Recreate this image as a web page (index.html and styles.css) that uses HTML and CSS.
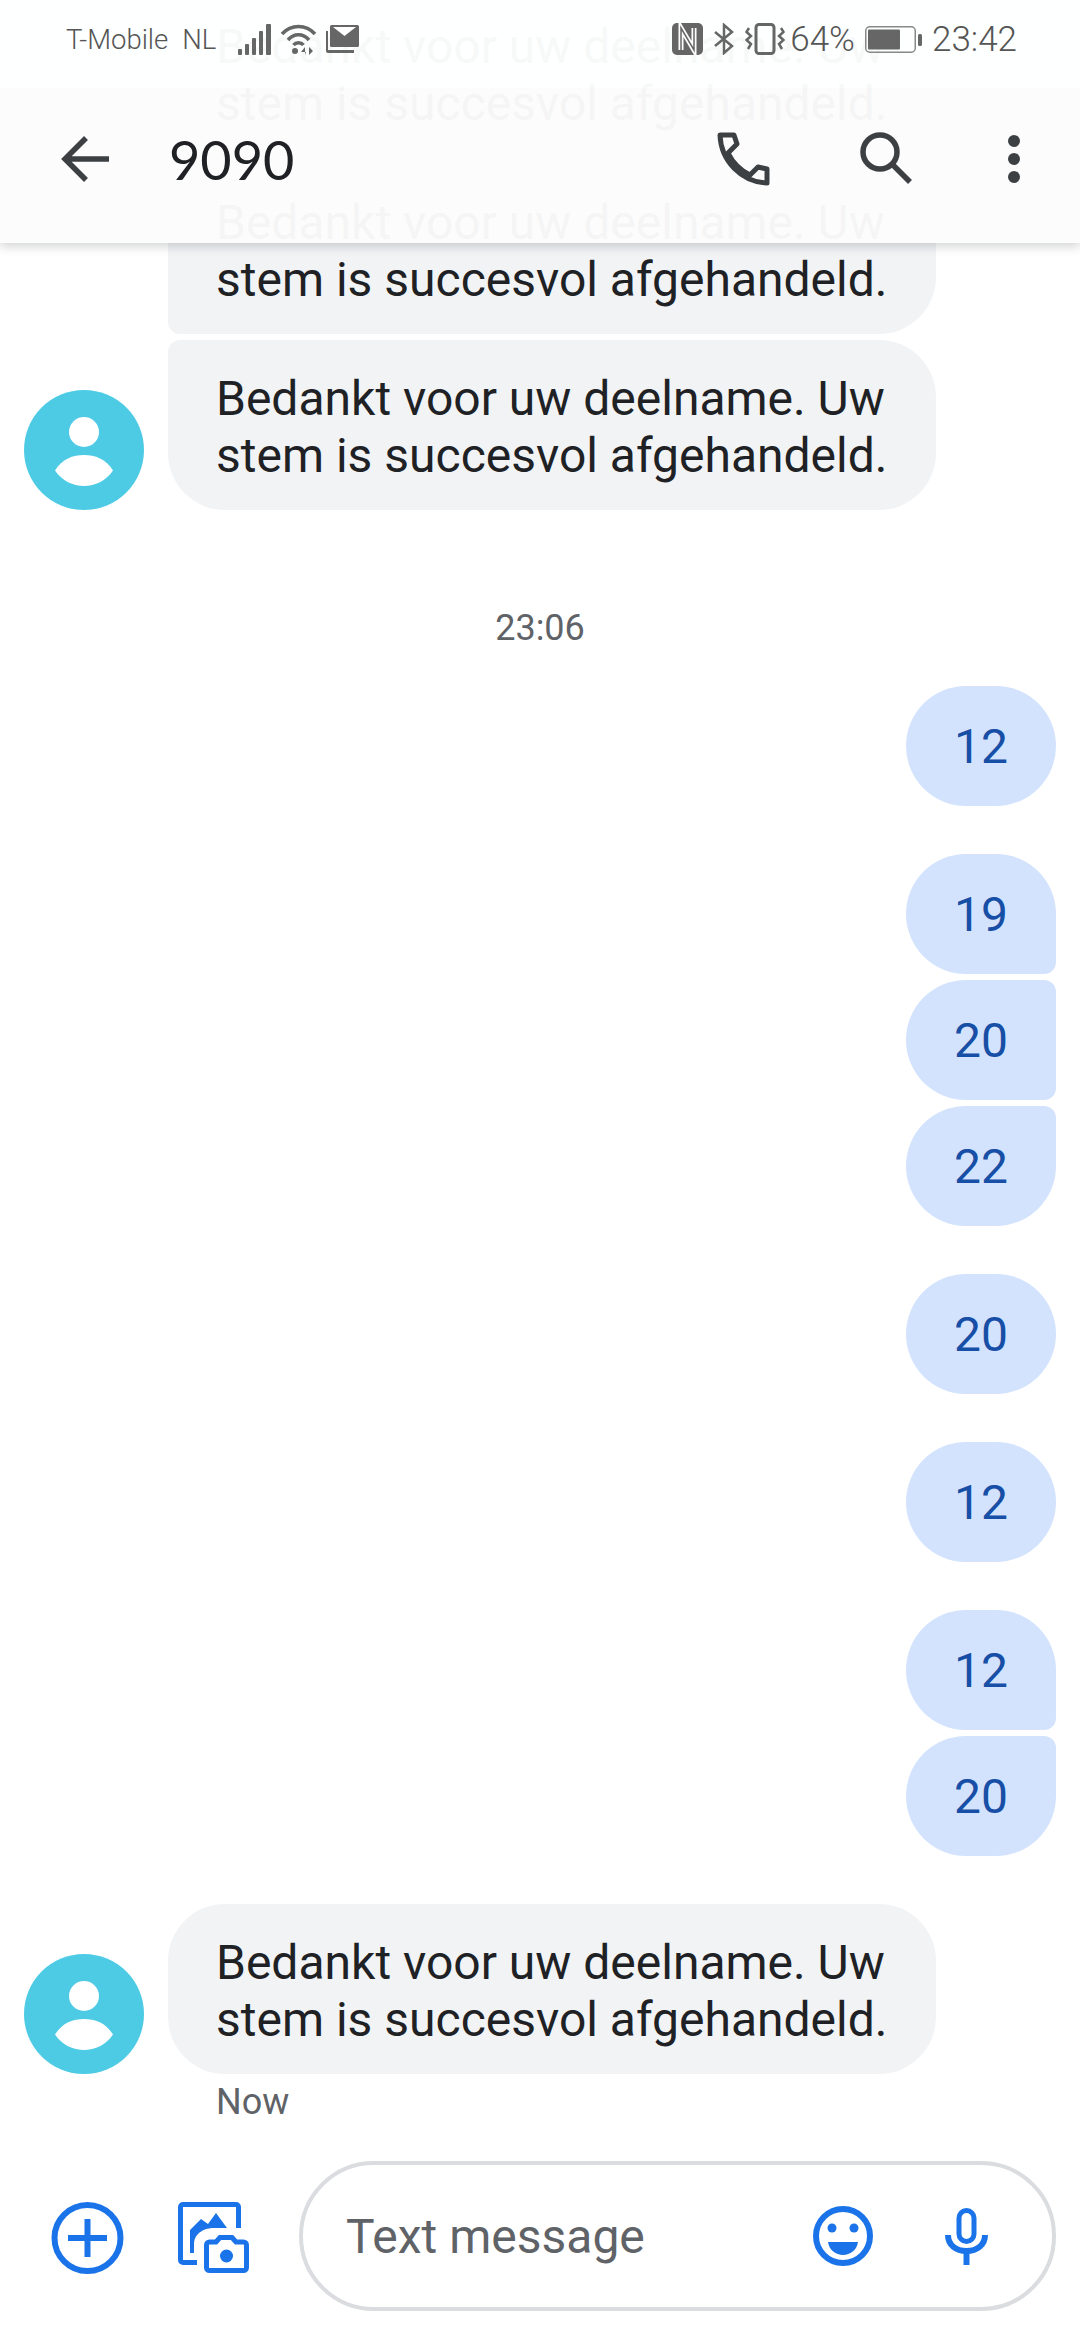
FILE: index.html
```html
<!DOCTYPE html>
<html lang="en">
<head>
<meta charset="utf-8">
<title>9090</title>
<link rel="stylesheet" href="styles.css">
</head>
<body>
<div class="screen">
  <main class="thread">
    <div class="row-in">
      <div class="avatar-slot"></div>
      <p class="bubble-in first">Bedankt voor uw deelname. Uw stem is succesvol afgehandeld.</p>
    </div>
    <div class="row-in">
      <div class="avatar-slot"></div>
      <p class="bubble-in middle">Bedankt voor uw deelname. Uw stem is succesvol afgehandeld.</p>
    </div>
    <div class="row-in">
      <svg class="avatar" viewBox="0 0 120 120"><circle cx="60" cy="60" r="60" fill="#4ecbe4"/><circle cx="60" cy="42" r="15" fill="#fff"/><path d="M31 80.500C38 69 49 65 60 65C71 65 82 69 89 80.500C82 91 71 96 60 96C49 96 38 91 31 80.500Z" fill="#fff"/></svg>
      <p class="bubble-in last">Bedankt voor uw deelname. Uw stem is succesvol afgehandeld.</p>
    </div>

    <div class="timestamp">23:06</div>

    <div class="group">
      <div class="bubble-out">12</div>
    </div>
    <div class="group">
      <div class="bubble-out out-first">19</div>
      <div class="bubble-out out-middle">20</div>
      <div class="bubble-out out-last">22</div>
    </div>
    <div class="group">
      <div class="bubble-out">20</div>
    </div>
    <div class="group">
      <div class="bubble-out">12</div>
    </div>
    <div class="group">
      <div class="bubble-out out-first">12</div>
      <div class="bubble-out out-last">20</div>
    </div>

    <div class="row-in row-final">
      <svg class="avatar" viewBox="0 0 120 120"><circle cx="60" cy="60" r="60" fill="#4ecbe4"/><circle cx="60" cy="42" r="15" fill="#fff"/><path d="M31 80.500C38 69 49 65 60 65C71 65 82 69 89 80.500C82 91 71 96 60 96C49 96 38 91 31 80.500Z" fill="#fff"/></svg>
      <p class="bubble-in single">Bedankt voor uw deelname. Uw stem is succesvol afgehandeld.</p>
    </div>
    <div class="meta">Now</div>
  </main>

  <footer class="composer">
    <svg class="ic-plus" viewBox="0 0 73 72" fill="none" stroke="#1a73e8" stroke-width="6"><circle cx="36.500" cy="36" r="33"/><path d="M17 36H56M36.500 17V55"/></svg>
    <svg class="ic-gallery" viewBox="0 0 72 72" fill="none" stroke="#1a73e8" stroke-width="5"><path d="M60.500 26V5A2.500 2.500 0 0 0 58 2.500H5A2.500 2.500 0 0 0 2.500 5V58A2.500 2.500 0 0 0 5 60.500H19"/><path d="M12 51V28L23 17L30 22L38 11L49 26H36C29 26 24 28 20 32C17 35 16 38 16 42V51Z" fill="#1a73e8" stroke="none"/><path d="M28.500 43A3 3 0 0 1 31.500 40H38L42 35.500H54L58 40H65.500A3 3 0 0 1 68.500 43V65.500A3 3 0 0 1 65.500 68.500H31.500A3 3 0 0 1 28.500 65.500Z"/><circle cx="48.500" cy="54" r="6.500" fill="#1a73e8" stroke="none"/></svg>
    <div class="field">
      <span class="placeholder">Text message</span>
      <svg class="ic-emoji" viewBox="0 0 60 60" fill="none"><circle cx="30" cy="30" r="27" stroke="#1a73e8" stroke-width="6"/><circle cx="19" cy="22" r="4.500" fill="#1a73e8"/><circle cx="41" cy="22" r="4.500" fill="#1a73e8"/><path d="M15 36H45C44 44 37 49 30 49C23 49 16 44 15 36Z" fill="#1a73e8"/></svg>
      <svg class="ic-mic" viewBox="0 0 43 57" fill="none" stroke="#1a73e8"><rect x="14" y="2.500" width="15" height="31" rx="7.500" stroke-width="5"/><path d="M3 27C3 37 11 43 21.500 43C32 43 40 37 40 27" stroke-width="6"/><path d="M21.500 42V57" stroke-width="6"/></svg>
    </div>
  </footer>

  <header class="top">
    <div class="status">
      <span class="carrier">T-Mobile</span>
      <span class="carrier region">NL</span>
      <svg class="st-signal" viewBox="0 0 34 31" fill="#666"><rect x="0" y="25" width="4" height="6" rx="1"/><rect x="7" y="20" width="4" height="11" rx="1"/><rect x="14" y="14" width="4" height="17" rx="1"/><rect x="21" y="7" width="4" height="24" rx="1"/><rect x="28" y="0" width="5" height="31" rx="1"/></svg>
      <svg class="st-wifi" viewBox="0 0 37 31" fill="none" stroke="#666" stroke-width="3.500"><path d="M2 10C11 0 26 0 35 10"/><path d="M8 16C14 9 23 9 29 16"/><path d="M13.500 21C16 18 21 18 23.500 21"/><circle cx="15" cy="27" r="3" fill="#666" stroke="none"/><path d="M25 31V23L21 28H26ZM29 23V31L33 27Z" fill="#666" stroke="none"/></svg>
      <svg class="st-mail" viewBox="0 0 33 28" fill="#666"><rect x="4" y="0" width="29" height="22" rx="1.500"/><path d="M7 2H30L18.500 11Z" fill="#fff"/><path d="M0 6H2V25H28V28H2A2 2 0 0 1 0 26Z"/></svg>
      <span class="spacer"></span>
      <svg class="st-nfc" viewBox="0 0 31 32"><rect width="31" height="32" rx="5" fill="#666"/><path d="M9 27V5L22 27V5" fill="none" stroke="#fff" stroke-width="5"/><path d="M9 27V5L22 27V5" fill="none" stroke="#666" stroke-width="1.500"/></svg>
      <svg class="st-bt" viewBox="0 0 20 32" fill="none" stroke="#666" stroke-width="2.500"><path d="M1 9L18 23L10 30V2L18 9L1 23"/></svg>
      <svg class="st-vib" viewBox="0 0 40 32" fill="none" stroke="#666"><rect x="11" y="1.500" width="18" height="29" rx="3" stroke-width="3"/><path d="M4 5L1.500 9L6 13L1.500 17L6 21L3 26" stroke-width="2.500"/><path d="M36 5L38.500 9L34 13L38.500 17L34 21L37 26" stroke-width="2.500"/></svg>
      <span class="st-text pct">64%</span>
      <svg class="st-batt" viewBox="0 0 57 27"><rect x="0.750" y="0.750" width="49.500" height="25.500" rx="4" fill="none" stroke="#888" stroke-width="1.500"/><rect x="3" y="3.500" width="32" height="20" rx="1" fill="#666"/><rect x="53" y="8" width="4" height="12" rx="1.500" fill="#666"/></svg>
      <span class="st-text clock">23:42</span>
    </div>
    <div class="appbar">
      <svg class="ic-back" viewBox="0 0 49 48" fill="none" stroke="#3c4043" stroke-width="5.500"><path d="M49 24H5M26 3L5 24L26 45"/></svg>
      <h1 class="title">9090</h1>
      <svg class="ic-call" viewBox="0 0 53 55" fill="none" stroke="#3c4043" stroke-width="5" stroke-linejoin="round"><path d="M3 3H17L20 12L11 21C16 31 23 38 33 43L41 35L50 37V51C24 50 4 29 3 3Z"/></svg>
      <svg class="ic-search" viewBox="0 0 52 52" fill="none" stroke="#3c4043"><circle cx="20" cy="20" r="17" stroke-width="5.500"/><path d="M32 32L50 50" stroke-width="5.500"/></svg>
      <svg class="ic-more" viewBox="0 0 12 48" fill="#3c4043"><circle cx="6" cy="6" r="6"/><circle cx="6" cy="24" r="6"/><circle cx="6" cy="42" r="6"/></svg>
    </div>
  </header>
</div>
</body>
</html>
```

FILE: styles.css
```css
* { box-sizing: border-box; }

html, body { margin: 0; padding: 0; background: #fff; }

.screen {
  position: relative;
  width: 1080px;
  height: 2340px;
  overflow: hidden;
  display: flex;
  flex-direction: column;
  font-family: Roboto, "Liberation Sans", sans-serif;
  background: #fff;
}

/* message list */
.thread {
  flex: 1;
  display: flex;
  flex-direction: column;
  margin-top: -12px;
}

.row-in {
  display: flex;
  align-items: flex-end;
  gap: 24px;
  padding-left: 24px;
  margin-bottom: 6px;
}

.row-final { margin-top: 48px; margin-bottom: 0; }

.avatar-slot, .avatar { width: 120px; height: 120px; flex: none; }
.avatar-slot { height: 0; }

.bubble-in {
  width: 768px;
  height: 170px;
  margin: 0;
  padding: 30px 48px 0;
  background: #f1f3f5;
  color: #202124;
  font-size: 48px;
  line-height: 57px;
}

.first { border-radius: 57px 57px 57px 12px; }
.middle { border-radius: 12px 57px 57px 12px; }
.last { border-radius: 12px 57px 57px 57px; }
.single { border-radius: 57px; }

.timestamp {
  height: 170px;
  padding-top: 92px;
  text-align: center;
  color: #5f6368;
  font-size: 36px;
  line-height: 40px;
  font-weight: 400;
}

.group {
  display: flex;
  flex-direction: column;
  align-items: flex-end;
  gap: 6px;
  padding-right: 24px;
  margin-bottom: 48px;
}

.group + .row-final { margin-top: 0; }

.bubble-out {
  width: 150px;
  height: 120px;
  display: flex;
  align-items: center;
  justify-content: center;
  background: #d3e3fd;
  color: #174ea6;
  font-size: 48px;
  border-radius: 60px;
}

.out-first { border-radius: 60px 60px 12px 60px; }
.out-middle { border-radius: 60px 12px 12px 60px; }
.out-last { border-radius: 60px 12px 60px 60px; }

.meta {
  padding: 8px 0 0 216px;
  color: #5f6368;
  font-size: 36px;
  line-height: 40px;
}

/* composer */
.composer {
  flex: none;
  height: 179px;
  display: flex;
  align-items: flex-start;
  padding: 0 24px 0 51px;
}

.ic-plus { width: 73px; height: 72px; margin-top: 41px; }
.ic-gallery { width: 72px; height: 72px; margin: 41px 49px 0 54px; }

.field {
  flex: 1;
  height: 150px;
  display: flex;
  align-items: center;
  padding: 0 64px 0 43px;
  border: 4px solid #dadce0;
  border-radius: 75px;
  background: #fff;
}

.placeholder {
  flex: 1;
  color: #5f6368;
  font-size: 48px;
}

.ic-emoji { width: 60px; height: 60px; }
.ic-mic { width: 43px; height: 57px; margin-left: 72px; }

/* status + app bar overlay */
.top {
  position: absolute;
  top: 0;
  left: 0;
  right: 0;
  box-shadow: 0 3px 10px rgba(60, 64, 67, .24);
}

.status {
  height: 88px;
  display: flex;
  align-items: center;
  padding: 0 63px 10px 66px;
  background: rgba(254, 255, 255, .97);
  color: #666;
}

.carrier { font-size: 27.500px; font-weight: 300; color: #555; }
.region { margin-left: 14px; }
.spacer { flex: 1; }

.st-signal { width: 34px; height: 31px; margin-left: 22px; }
.st-wifi { width: 37px; height: 31px; margin-left: 8px; }
.st-mail { width: 33px; height: 28px; margin-left: 9px; }
.st-nfc { width: 31px; height: 32px; }
.st-bt { width: 22px; height: 32px; margin-left: 10px; }
.st-vib { width: 40px; height: 32px; margin-left: 10px; }
.st-text { font-size: 35px; font-weight: 300; color: #555; }
.pct { margin-left: 5px; }
.st-batt { width: 57px; height: 27px; margin-left: 10px; }
.clock { margin-left: 10px; }

.appbar {
  height: 155px;
  display: flex;
  align-items: flex-start;
  padding: 47px 60px 0 60px;
  background: rgba(252, 252, 252, .97);
}

.ic-back { width: 49px; height: 48px; }
.title {
  flex: 1;
  margin: -5px 0 0 60px;
  color: #202124;
  font-family: Lato, Roboto, sans-serif;
  font-size: 54px;
  font-weight: 400;
  line-height: 60px;
}
.ic-call { width: 53px; height: 55px; margin-top: -3px; }
.ic-search { width: 52px; height: 52px; margin-left: 90px; margin-top: -3px; }
.ic-more { width: 12px; height: 48px; margin-left: 96px; }
```
